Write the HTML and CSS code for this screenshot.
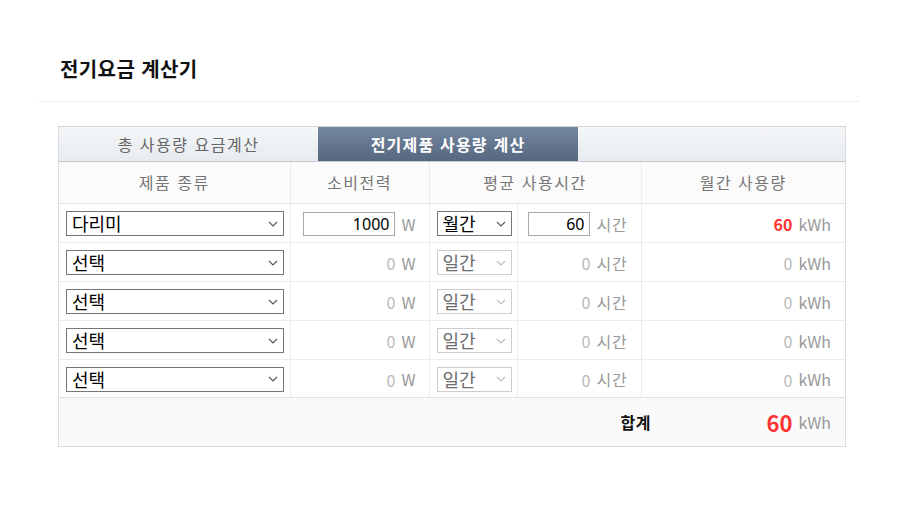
FILE: index.html
```html
<!DOCTYPE html>
<html lang="ko">
<head>
<meta charset="utf-8">
<link rel="stylesheet" href="styles.css">
</head>
<body>
<div class="page">
  <h1 class="title">전기요금 계산기</h1>
  <div class="calc">
    <div class="tabs">
      <div class="tab">총 사용량 요금계산</div>
      <div class="tab active">전기제품 사용량 계산</div>
      <div class="tab-rest"></div>
    </div>
    <table class="grid">
      <colgroup>
        <col class="c1"><col class="c2"><col class="c3"><col class="c4"><col class="c5">
      </colgroup>
      <thead>
        <tr>
          <th>제품 종류</th>
          <th>소비전력</th>
          <th colspan="2">평균 사용시간</th>
          <th>월간 사용량</th>
        </tr>
      </thead>
      <tbody>
        <tr>
          <td><select class="prod"><option>다리미</option></select></td>
          <td class="r"><input class="num w" value="1000"><span class="unit">W</span></td>
          <td><select class="period"><option>월간</option></select></td>
          <td class="r"><input class="num h" value="60"><span class="unit kr">시간</span></td>
          <td class="r"><b class="red">60</b><span class="unit">kWh</span></td>
        </tr>
        <tr>
          <td><select class="prod"><option>선택</option></select></td>
          <td class="r"><span class="zero">0</span><span class="unit">W</span></td>
          <td><select class="period" disabled><option>일간</option></select></td>
          <td class="r"><span class="zero">0</span><span class="unit kr">시간</span></td>
          <td class="r"><span class="zero">0</span><span class="unit">kWh</span></td>
        </tr>
        <tr>
          <td><select class="prod"><option>선택</option></select></td>
          <td class="r"><span class="zero">0</span><span class="unit">W</span></td>
          <td><select class="period" disabled><option>일간</option></select></td>
          <td class="r"><span class="zero">0</span><span class="unit kr">시간</span></td>
          <td class="r"><span class="zero">0</span><span class="unit">kWh</span></td>
        </tr>
        <tr>
          <td><select class="prod"><option>선택</option></select></td>
          <td class="r"><span class="zero">0</span><span class="unit">W</span></td>
          <td><select class="period" disabled><option>일간</option></select></td>
          <td class="r"><span class="zero">0</span><span class="unit kr">시간</span></td>
          <td class="r"><span class="zero">0</span><span class="unit">kWh</span></td>
        </tr>
        <tr>
          <td><select class="prod"><option>선택</option></select></td>
          <td class="r"><span class="zero">0</span><span class="unit">W</span></td>
          <td><select class="period" disabled><option>일간</option></select></td>
          <td class="r"><span class="zero">0</span><span class="unit kr">시간</span></td>
          <td class="r"><span class="zero">0</span><span class="unit">kWh</span></td>
        </tr>
      </tbody>
      <tfoot>
        <tr>
          <td colspan="5">
            <div class="sum">
              <span class="sum-label">합계</span>
              <span class="sum-value"><b class="red big">60</b><span class="unit">kWh</span></span>
            </div>
          </td>
        </tr>
      </tfoot>
    </table>
  </div>
</div>
</body>
</html>
```

FILE: styles.css
```css
* { box-sizing: border-box; }
html, body { margin: 0; padding: 0; background: #fff; }
body {
  font-family: "Noto Sans CJK KR", "Noto Sans", sans-serif;
  color: #333;
}
.page {
  width: 822px;
  margin-left: 38px;
  padding-top: 54px;
}
.title {
  margin: 0;
  padding: 0 0 18px 22px;
  font-size: 20px;
  line-height: 29px;
  font-weight: 700;
  letter-spacing: 0.4px;
  color: #111;
  border-bottom: 1px solid #eeeeee;
}
.calc {
  width: 788px;
  margin: 24px 0 0 20px;
  border: 1px solid #dcdcdc;
  border-top: 1px solid #d3d6da;
}
.tabs {
  display: flex;
  height: 35px;
  border-bottom: 1px solid #c4c9cf;
}
.tab, .tab-rest {
  background: linear-gradient(#f4f6f8, #e7ebef);
}
.tab {
  width: 259px;
  display: flex;
  align-items: center;
  justify-content: center;
  font-size: 16px;
  color: #666;
  letter-spacing: 1.5px;
}
.tab.active {
  width: 260px;
  background: linear-gradient(#7487a0, #56677f);
  color: #fff;
  font-weight: 700;
  letter-spacing: 1.2px;
}
.tab-rest { flex: 1; }
.grid {
  width: 100%;
  border-collapse: collapse;
  table-layout: fixed;
  font-size: 16px;
}
.c1 { width: 231px; }
.c2 { width: 139px; }
.c3 { width: 88px; }
.c4 { width: 124px; }
.c5 { width: auto; }
.grid th {
  height: 41px;
  background: #fbfbfb;
  font-weight: 400;
  font-size: 16px;
  color: #777;
  border-right: 1px solid #ececec;
  border-bottom: 1px solid #e4e4e4;
  letter-spacing: 1.5px;
}
.grid th:last-child { border-right: 0; }
.grid tbody td {
  height: 39px;
  padding: 0 6px 0 7px;
  border-right: 1px solid #ececec;
  border-bottom: 1px solid #ececec;
  white-space: nowrap;
}
.grid tbody tr:last-child td { height: 38px; border-bottom: 1px solid #e0e0e0; }
.grid tbody td.r { padding-right: 13px; }
.grid tbody td:last-child { border-right: 0; padding-right: 14px; }
.r { text-align: right; }
select {
  -webkit-appearance: none;
  appearance: none;
  font-family: inherit;
  font-size: 18px;
  line-height: 23px;
  height: 25px;
  color: #000;
  border: 1px solid #767676;
  border-radius: 0;
  background: #fff url("data:image/svg+xml;utf8,<svg xmlns='http://www.w3.org/2000/svg' width='10' height='6' viewBox='0 0 10 6'><path d='M1 1l4 4 4-4' fill='none' stroke='%23555' stroke-width='1.1'/></svg>") no-repeat right 5px center;
  padding: 0 20px 0 5px;
  vertical-align: middle;
}
select.prod { width: 218px; }
select.period { width: 75px; }
select:disabled {
  border-color: #cdcdcd;
  color: #6d6d6d;
  background: #fff url("data:image/svg+xml;utf8,<svg xmlns='http://www.w3.org/2000/svg' width='10' height='6' viewBox='0 0 10 6'><path d='M1 1l4 4 4-4' fill='none' stroke='%23bbb' stroke-width='1.1'/></svg>") no-repeat right 5px center;
  opacity: 1;
}
input.num {
  font-family: "Noto Sans", sans-serif;
  font-size: 16px;
  height: 24px;
  border: 1px solid #a9a9a9;
  text-align: right;
  padding: 0 5px;
  color: #000;
  vertical-align: middle;
}
input.w { width: 92px; }
input.h { width: 62px; }
.unit {
  color: #999;
  margin-left: 6px;
  vertical-align: middle;
}
.unit.kr { letter-spacing: 0.8px; }
.zero {
  color: #bbb;
  vertical-align: middle;
}
.red {
  color: #ff3333;
  font-weight: 700;
  vertical-align: middle;
}
.red.big { font-size: 22px; }
.grid tfoot td {
  height: 49px;
  background: #fafafa;
  padding: 0 14px 0 0;
}
.sum {
  display: flex;
  justify-content: flex-end;
  align-items: center;
}
.sum-label {
  font-weight: 700;
  color: #111;
  letter-spacing: 0.5px;
}
.sum-value {
  width: 180px;
  text-align: right;
}
```
